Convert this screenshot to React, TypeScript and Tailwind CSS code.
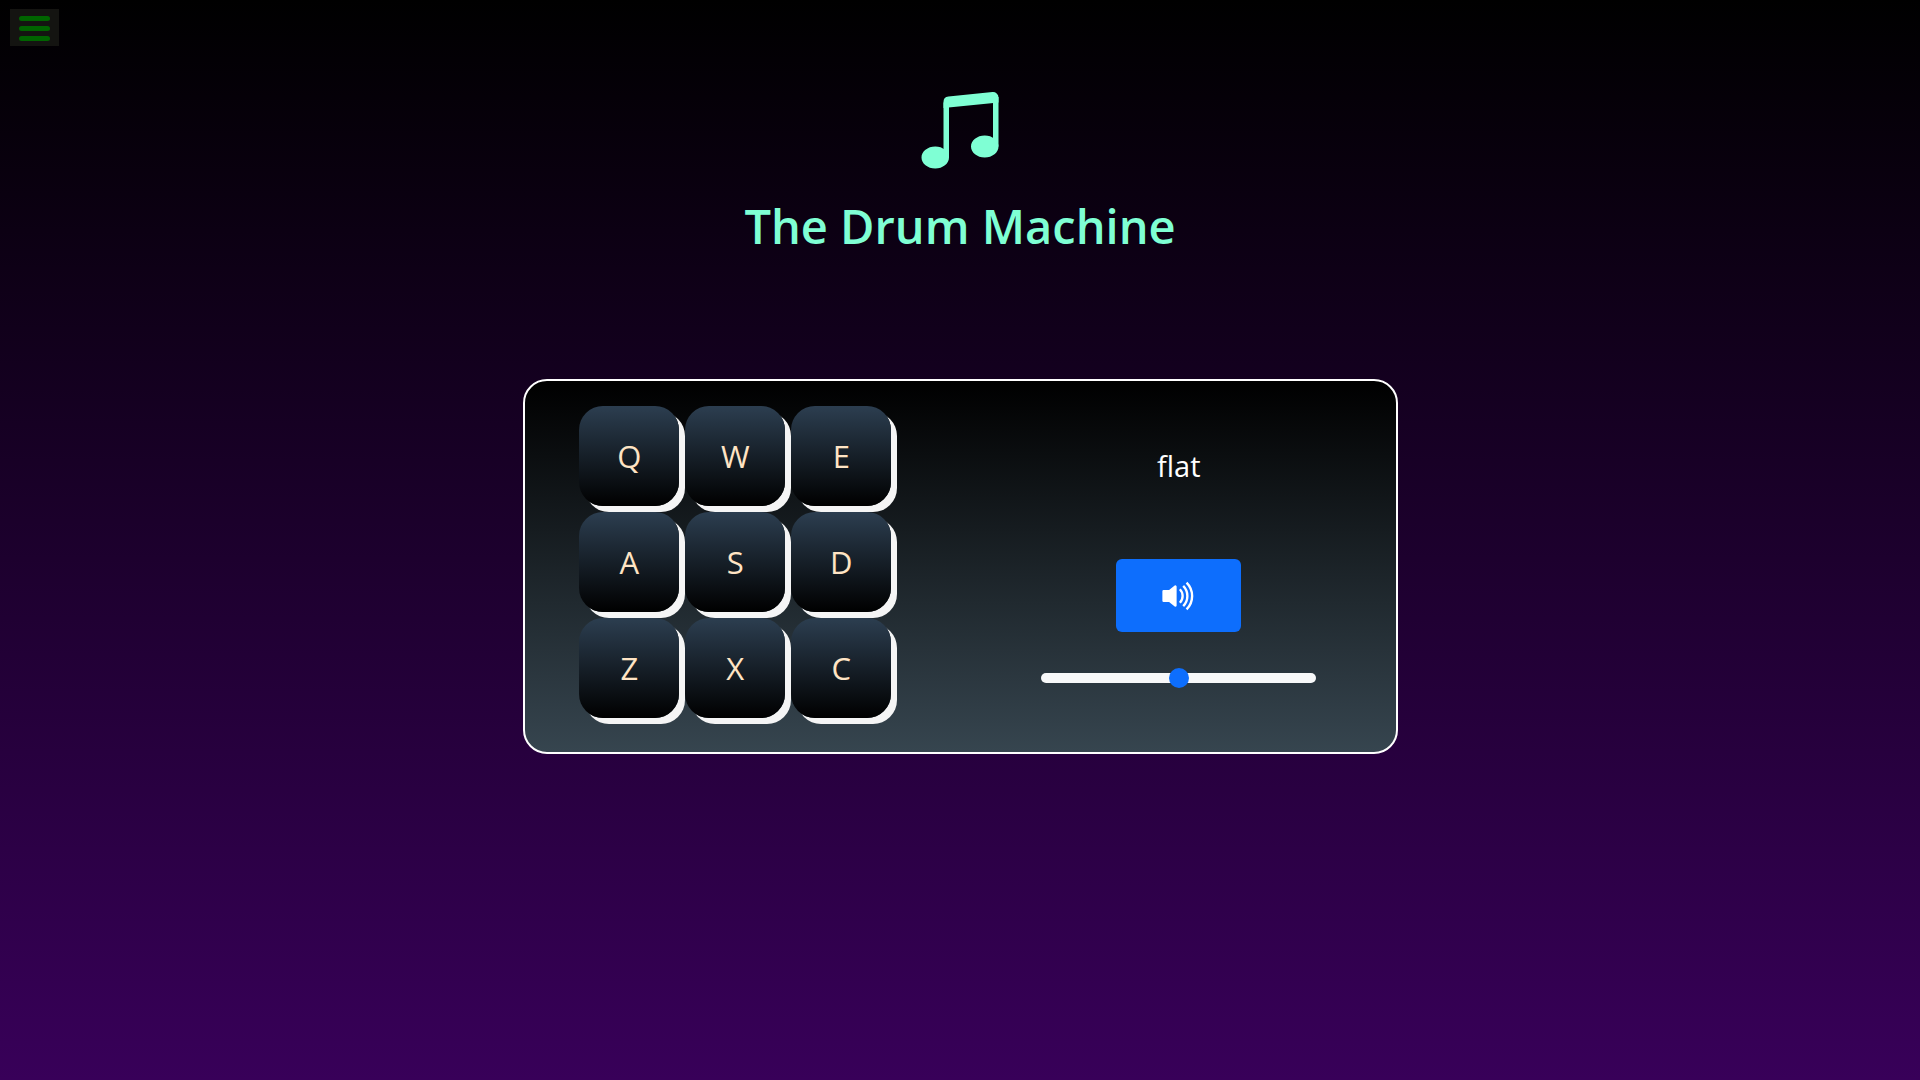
import { useState } from "react";
import { BsMusicNoteBeamed, BsVolumeUpFill } from "react-icons/bs";

const pads = ["Q", "W", "E", "A", "S", "D", "Z", "X", "C"];

function MenuButton() {
  return (
    <button
      type="button"
      aria-label="Open menu"
      className="mt-[9px] ml-2.5 flex h-[37px] w-[49px] flex-col items-center gap-[5px] self-start bg-[#141411] pt-[7px]"
    >
      <span className="h-[5px] w-[31px] rounded-full bg-[#006400]" />
      <span className="h-[5px] w-[31px] rounded-full bg-[#006400]" />
      <span className="h-[5px] w-[31px] rounded-full bg-[#006400]" />
    </button>
  );
}

function Pad({ label }: { label: string }) {
  return (
    <button
      type="button"
      className="size-[100px] rounded-3xl bg-[linear-gradient(to_bottom,#2c3e50,#000000)] pt-px text-[31px] text-[#ffe4c4] shadow-[6px_6px_0_#f5f5f5]"
    >
      {label}
    </button>
  );
}

export default function App() {
  const [volume, setVolume] = useState(50);
  return (
    <div className="flex min-h-screen flex-col bg-[linear-gradient(to_bottom,#000000,#380059)] font-['Open_Sans','Noto_Sans',sans-serif]">
      <MenuButton />
      <header className="mt-10 flex flex-col items-center text-[#7fffd4]">
        <BsMusicNoteBeamed className="size-[88px]" aria-hidden="true" />
        <h1 className="mt-4 text-[47px] leading-[72px] font-semibold">The Drum Machine</h1>
      </header>
      <main className="mx-auto mt-[117px] grid w-full max-w-[875px] grid-cols-2 rounded-3xl border-2 border-white bg-[linear-gradient(to_bottom,#000000,#36454f)] pt-[25px] pb-7">
        <div className="grid grid-cols-[repeat(3,100px)] content-start justify-center gap-1.5 pr-3.5 pb-1.5">
          {pads.map((p) => (
            <Pad key={p} label={p} />
          ))}
        </div>
        <div className="flex flex-col items-center pl-0.5">
          <p className="mt-9 text-[29px] leading-[48px] text-white">flat</p>
          <button
            type="button"
            aria-label="Toggle sound"
            className="mt-[69px] flex h-[73px] w-[125px] items-center justify-center rounded-md bg-[#0d6efd] text-white"
          >
            <BsVolumeUpFill className="size-[38px]" />
          </button>
          <input
            type="range"
            aria-label="Volume"
            min={0}
            max={100}
            value={volume}
            onChange={(e) => setVolume(Number(e.target.value))}
            className="mt-9 h-5 w-[275px] appearance-none bg-transparent [&::-webkit-slider-runnable-track]:h-2.5 [&::-webkit-slider-runnable-track]:rounded-full [&::-webkit-slider-runnable-track]:bg-[#f8f9fa] [&::-webkit-slider-thumb]:-mt-[5px] [&::-webkit-slider-thumb]:size-5 [&::-webkit-slider-thumb]:appearance-none [&::-webkit-slider-thumb]:rounded-full [&::-webkit-slider-thumb]:bg-[#0d6efd]"
          />
        </div>
      </main>
    </div>
  );
}
